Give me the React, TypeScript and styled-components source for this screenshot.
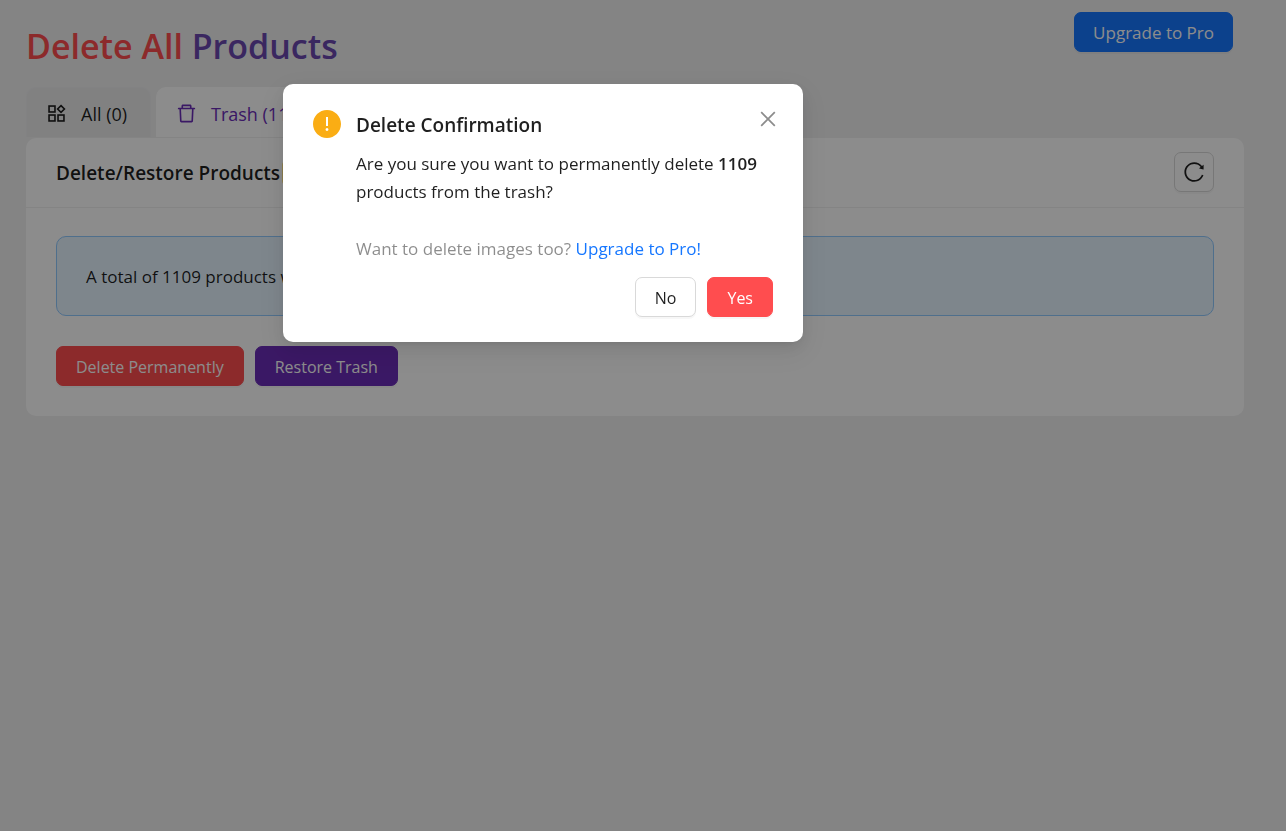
import React from "react";
import styled, { createGlobalStyle } from "styled-components";
import {
  AiFillExclamationCircle,
  AiOutlineClose,
  AiOutlineDelete,
  AiOutlineReload,
} from "react-icons/ai";

const GlobalStyle = createGlobalStyle`
  * { box-sizing: border-box; }
  body {
    margin: 0;
    background: #f0f0f1;
    color: rgba(0, 0, 0, 0.88);
    font-family: "Open Sans", "Noto Sans", sans-serif;
    font-size: 17px;
    line-height: 28px;
  }
  h1, h2, p { margin: 0; }
  strong { font-weight: 600; }
  svg { flex-shrink: 0; }
  button { font: inherit; cursor: pointer; }
`;

const Page = styled.div`
  min-height: 100vh;
  padding: 12px 42px 24px 26px;
`;

const TopBar = styled.header`
  display: flex;
  justify-content: space-between;
  align-items: flex-start;
  height: 75px;
  padding-right: 11px;
`;

const Title = styled.h1`
  padding-top: 12px;
  font-size: 34px;
  line-height: 44px;
  font-weight: 600;
  color: #6b47b0;
`;

const TitleAccent = styled.span`
  color: #ff4d4f;
`;

type Tone = "primary" | "danger" | "purple" | "plain";

const tones: Record<Tone, { bg: string; fg: string; border: string }> = {
  primary: { bg: "#1677ff", fg: "#ffffff", border: "#1677ff" },
  danger: { bg: "#ff4d4f", fg: "#ffffff", border: "#ff4d4f" },
  purple: { bg: "#6b2cb8", fg: "#ffffff", border: "#6b2cb8" },
  plain: { bg: "#ffffff", fg: "rgba(0, 0, 0, 0.88)", border: "#d9d9d9" },
};

const Button = styled.button<{ $tone: Tone; $large?: boolean }>`
  display: inline-flex;
  align-items: center;
  justify-content: center;
  height: 40px;
  padding: 2px ${(p) => (p.$large ? "18px" : "19px")} 0;
  border: 1px solid ${(p) => tones[p.$tone].border};
  border-radius: 7px;
  background: ${(p) => tones[p.$tone].bg};
  color: ${(p) => tones[p.$tone].fg};
  font-size: ${(p) => (p.$large ? "17px" : "16px")};
  box-shadow: 0 2px 0 rgba(0, 0, 0, 0.03);
`;

const IconButton = styled(Button)`
  width: 40px;
  padding: 0;
`;

const ButtonRow = styled.div<{ $end?: boolean }>`
  display: flex;
  gap: 11px;
  justify-content: ${(p) => (p.$end ? "flex-end" : "flex-start")};
`;

const Tabs = styled.div`
  display: flex;
  gap: 5px;
  border-bottom: 1px solid #f0f0f0;
`;

const Tab = styled.button<{ $active?: boolean }>`
  display: flex;
  align-items: center;
  gap: 13px;
  min-width: 125px;
  height: 50px;
  padding: 2px 18px 0;
  border: 1px solid ${(p) => (p.$active ? "#ffffff" : "#ededee")};
  border-bottom: 0;
  border-radius: 10px 10px 0 0;
  background: ${(p) => (p.$active ? "#ffffff" : "#ebebec")};
  color: ${(p) => (p.$active ? "#6b2cb8" : "rgba(0, 0, 0, 0.88)")};
  font-size: 18px;
`;

const Card = styled.section`
  border-radius: 10px;
  background: #ffffff;
`;

const CardHead = styled.div`
  display: flex;
  align-items: flex-start;
  justify-content: space-between;
  height: 70px;
  padding: 14px 30px;
  border-bottom: 1px solid #f0f0f0;
`;

const CardTitle = styled.h2`
  display: flex;
  align-items: center;
  gap: 2px;
  height: 42px;
  font-size: 19px;
  font-weight: 600;
`;

const Tag = styled.span`
  padding: 0 8px;
  border: 1px solid #ffe58f;
  border-radius: 5px;
  background: #fffbe6;
  color: #d48806;
  font-size: 15px;
  line-height: 24px;
  font-weight: 400;
`;

const CardBody = styled.div`
  display: flex;
  flex-direction: column;
  gap: 30px;
  padding: 28px 30px 30px;
`;

const Alert = styled.div`
  padding: 26px 29px 24px;
  border: 1px solid #91caff;
  border-radius: 10px;
  background: #e6f4ff;
`;

const Mask = styled.div`
  position: fixed;
  inset: 0;
  display: flex;
  justify-content: center;
  align-items: flex-start;
  padding: 84px 200px 0 0;
  background: rgba(0, 0, 0, 0.45);
`;

const Dialog = styled.div`
  width: 520px;
  padding: 25px 30px;
  border-radius: 10px;
  background: #ffffff;
  box-shadow: 0 6px 16px rgba(0, 0, 0, 0.08), 0 3px 6px -4px rgba(0, 0, 0, 0.12),
    0 9px 28px 8px rgba(0, 0, 0, 0.05);
`;

const DialogMain = styled.div`
  display: grid;
  grid-template-columns: 28px 1fr 28px;
  column-gap: 15px;
`;

const DialogTitle = styled.h2`
  font-size: 19px;
  line-height: 32px;
  font-weight: 600;
`;

const DialogIcon = styled.span`
  display: flex;
  justify-content: center;
  align-items: center;
  height: 30px;
  color: #faad14;
`;

const DialogText = styled.div`
  grid-column: 2 / 4;
  padding-top: 9px;
  margin-bottom: 14px;
`;

const Upsell = styled.p`
  margin-top: 29px;
  color: rgba(0, 0, 0, 0.45);
  a { color: #1677ff; text-decoration: none; }
`;

const Close = styled.button`
  display: flex;
  align-items: center;
  justify-content: center;
  height: 20px;
  padding: 0;
  border: 0;
  background: none;
  color: rgba(0, 0, 0, 0.45);
  margin: 0 -6px 0 12px;
`;

const ProductIcon = () => (
  <svg width="23" height="23" viewBox="0 0 1024 1024" fill="none" stroke="currentColor" strokeWidth="72" aria-hidden="true">
    <rect x="180" y="180" width="264" height="264" />
    <rect x="180" y="580" width="264" height="264" />
    <rect x="580" y="580" width="264" height="264" />
    <path d="M713 160 L864 311 L713 462 L562 311 Z" />
  </svg>
);

export default function App() {
  return (
    <>
      <GlobalStyle />
      <Page>
        <TopBar>
          <Title>
            <TitleAccent>Delete All</TitleAccent> Products
          </Title>
          <Button $tone="primary" $large>Upgrade to Pro</Button>
        </TopBar>
        <Tabs role="tablist">
          <Tab role="tab" aria-selected="false">
            <ProductIcon />
            All (0)
          </Tab>
          <Tab role="tab" aria-selected="true" $active>
            <AiOutlineDelete size={23} />
            Trash (1109)
          </Tab>
        </Tabs>
        <Card>
          <CardHead>
            <CardTitle>
              Delete/Restore Products <Tag>Trash</Tag>
            </CardTitle>
            <IconButton $tone="plain" aria-label="Reload">
              <AiOutlineReload size={24} />
            </IconButton>
          </CardHead>
          <CardBody>
            <Alert role="status">A total of 1109 products were found in the trash.</Alert>
            <ButtonRow>
              <Button $tone="danger">Delete Permanently</Button>
              <Button $tone="purple">Restore Trash</Button>
            </ButtonRow>
          </CardBody>
        </Card>
      </Page>
      <Mask>
        <Dialog role="dialog" aria-modal="true" aria-labelledby="dialog-title">
          <DialogMain>
            <DialogIcon>
              <AiFillExclamationCircle size={32} />
            </DialogIcon>
            <DialogTitle id="dialog-title">Delete Confirmation</DialogTitle>
            <Close aria-label="Close">
              <AiOutlineClose size={22} />
            </Close>
            <DialogText>
              <p>
                Are you sure you want to permanently delete <strong>1109</strong> products from the trash?
              </p>
              <Upsell>
                Want to delete images too? <a href="#pro">Upgrade to Pro!</a>
              </Upsell>
            </DialogText>
          </DialogMain>
          <ButtonRow $end>
            <Button $tone="plain">No</Button>
            <Button $tone="danger">Yes</Button>
          </ButtonRow>
        </Dialog>
      </Mask>
    </>
  );
}
